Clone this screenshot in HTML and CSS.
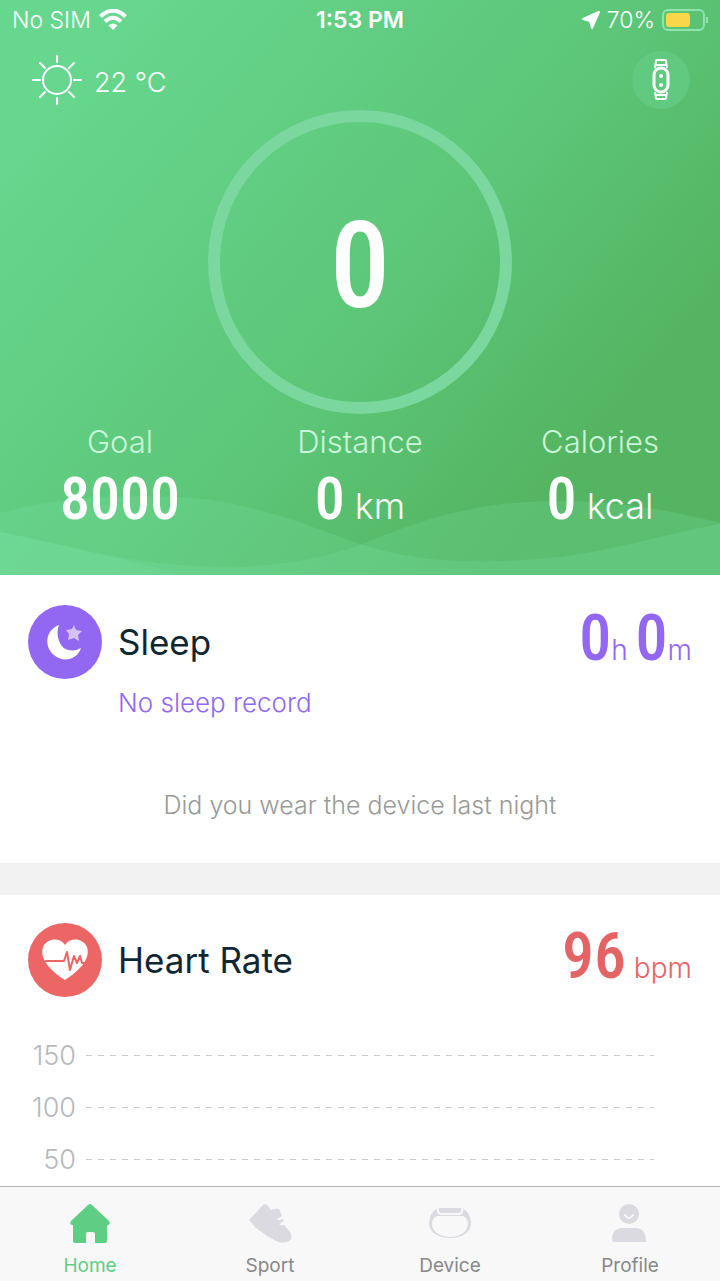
FILE: index.html
```
<!DOCTYPE html>
<html lang="en">
<head>
<meta charset="utf-8">
<meta name="viewport" content="width=device-width, initial-scale=1">
<title>Home</title>
<link rel="stylesheet" href="styles.css">
</head>
<body>

<header class="summary">
    <svg class="waves" viewBox="0 0 720 80" preserveAspectRatio="none" aria-hidden="true">
        <path class="wave" d="M0 18C60 2 120 0 180 2C250 6 300 28 360 49C420 68 480 70 560 62C620 54 670 38 720 29V80H0Z"/>
        <path class="wave" d="M0 37C60 48 110 64 180 70C250 76 310 68 360 50C420 26 470 6 560 6C630 6 680 18 720 28V80H0Z"/>
        <path class="wave" d="M0 37C60 50 120 62 180 80H0Z"/>
    </svg>

    <div class="status">
        <div class="status-side">
            <span>No SIM</span>
            <svg width="28" height="22" viewBox="0 0 28 22" aria-hidden="true">
                <path d="M1.5 7.5Q14-4 26.500 7.500M6 12.500Q14 5 22 12.500" fill="none" stroke="#fff" stroke-width="4"/>
                <path d="M9.500 16.500Q14 12.500 18.500 16.500L14 21Z" fill="#fff"/>
            </svg>
        </div>
        <strong>1:53 PM</strong>
        <div class="status-side status-right">
            <svg width="18" height="18" viewBox="0 0 18 18" aria-hidden="true">
                <path d="M17 1L10 17L8 10L1 8Z" fill="#fff" stroke="#fff" stroke-width="2" stroke-linejoin="round"/>
            </svg>
            <span>70%</span>
            <svg width="46" height="24" viewBox="0 0 46 24" aria-hidden="true">
                <rect x="1" y="2" width="41" height="20" rx="5" fill="none" stroke="#8fe3ac" stroke-width="2"/>
                <rect x="4" y="5" width="24" height="14" rx="3" fill="#f9d64a"/>
                <path d="M45 9v6" stroke="#8fe3ac" stroke-width="2"/>
            </svg>
        </div>
    </div>

    <div class="toolbar">
        <div class="weather">
            <svg width="50" height="50" viewBox="0 0 50 50" fill="none" stroke="#fff" stroke-width="2" stroke-linecap="round" aria-hidden="true">
                <circle cx="25" cy="25" r="14"/>
                <path d="M25 1v6M25 43v6M1 25h7M42 25h7M8 8l5 5M37 37l5 5M42 8l-5 5M13 37l-5 5"/>
            </svg>
            <span>22 °C</span>
        </div>
        <button class="watch" type="button" aria-label="Device">
            <svg width="18" height="42" viewBox="0 0 18 42" fill="none" stroke="#fff" stroke-width="2" aria-hidden="true">
                <path d="M3 9L4 2Q4 1 5 1H13Q14 1 14 2L15 9M4 6H14M3 33L4 39Q4 40 5 40H13Q14 40 14 39L15 33M4 36H14"/>
                <rect x="2" y="9" width="14" height="24" rx="7" stroke-width="3"/>
                <circle cx="9" cy="17" r="2" fill="#fff" stroke="none"/>
                <circle cx="9" cy="26" r="2" fill="#fff" stroke="none"/>
            </svg>
        </button>
    </div>

    <div class="ring">0</div>

    <dl class="stats">
        <div>
            <dt>Goal</dt>
            <dd><b>8000</b></dd>
        </div>
        <div>
            <dt>Distance</dt>
            <dd><b>0</b> km</dd>
        </div>
        <div>
            <dt>Calories</dt>
            <dd><b>0</b> kcal</dd>
        </div>
    </dl>
</header>

<main>
    <section class="card sleep">
        <div class="card-head">
            <svg width="74" height="74" viewBox="0 0 74 74" aria-hidden="true">
                <circle cx="37" cy="37" r="37" fill="#9268f2"/>
                <path d="M31 20C17 25 16 42 26 50C35 58 49 55 53 43C44 48 35 45 32 38C29 32 29 25 31 20Z" fill="#fff"/>
                <path d="M46 20l2 5 6 1-4 4 1 6-5-3-6 2 1-6-3-4 6-1z" fill="#d3c3ef"/>
            </svg>
            <h2>Sleep</h2>
            <p class="value"><b>0</b>h <b>0</b>m</p>
        </div>
        <p class="record">No sleep record</p>
        <p class="hint">Did you wear the device last night</p>
    </section>

    <section class="card heart">
        <div class="card-head">
            <svg width="74" height="74" viewBox="0 0 74 74" aria-hidden="true">
                <circle cx="37" cy="37" r="37" fill="#ec6666"/>
                <path d="M37 22C32 14 19 15 15 24C11 36 23 48 37 57C51 48 63 36 59 24C55 15 42 14 37 22Z" fill="#fff"/>
                <path d="M17 38H36L39 29L42 47L46 33L49 40L52 33L54 40H58" fill="none" stroke="#ec6666" stroke-width="2" stroke-linejoin="round"/>
            </svg>
            <h2>Heart Rate</h2>
            <p class="value"><b>96</b> bpm</p>
        </div>
        <ul class="chart">
            <li><span>150</span><i></i></li>
            <li><span>100</span><i></i></li>
            <li><span>50</span><i></i></li>
        </ul>
    </section>
</main>

<nav class="tabs">
    <a class="active" href="#home">
        <svg width="44" height="44" viewBox="0 0 44 44" aria-hidden="true">
            <path d="M20 3Q22 1 24 3L41 19Q43 22 40 23H39V39Q39 41 37 41H27V32Q27 30 25 30H20Q18 30 18 32V41H7Q5 41 5 39V23H4Q1 22 3 19Z" fill="#60cd84"/>
        </svg>
        Home
    </a>
    <a href="#sport">
        <svg width="44" height="44" viewBox="0 0 44 44" aria-hidden="true">
            <path d="M1 18L15 3Q17 1 19 3L23 8Q28 6 31 7L34 14L29 17Q29 19 35 17L36 19L31 22Q32 24 36 23L42 30Q44 33 43 37Q40 42 30 40Q18 34 8 26Z" fill="#dbdae0"/>
        </svg>
        Sport
    </a>
    <a href="#device">
        <svg width="44" height="44" viewBox="0 0 44 44" aria-hidden="true">
            <path fill-rule="evenodd" d="M10 6H34Q43 11 43 21C43 31 33 36 22 36S1 31 1 21Q1 11 10 6ZM9 14Q4 16 4 22C4 30 13 35 22 35S40 30 40 22Q40 16 35 14Z" fill="#dbdae0"/>
            <path d="M10 5H34Q35 12 31 12H13Q9 12 10 5Z" fill="#dbdae0" stroke="#f8f8f8" stroke-width="2"/>
        </svg>
        Device
    </a>
    <a href="#profile">
        <svg width="44" height="44" viewBox="0 0 44 44" aria-hidden="true">
            <circle cx="21" cy="12" r="10" fill="#dbdae0"/>
            <path d="M17 13Q21 19 25 13" fill="none" stroke="#f8f8f8" stroke-width="2" stroke-linecap="round"/>
            <path d="M4 36Q5 26 14 26H29Q38 27 38 40H6Q4 40 4 36Z" fill="#dbdae0"/>
        </svg>
        Profile
    </a>
</nav>

</body>
</html>
```
FILE: styles.css
```
* {
    box-sizing: border-box;
}

body {
    display: flex;
    flex-direction: column;
    min-height: 100vh;
    margin: 0;
    font-family: Inter, "Liberation Sans", sans-serif;
    background-color: #fff;
    color: #0f2733;
}

h2, p, dl, dd, ul {
    margin: 0;
    padding: 0;
}

svg {
    display: block;
    flex-shrink: 0;
}

b {
    font-family: "Roboto Condensed", Roboto, sans-serif;
    font-weight: 500;
}

.summary {
    position: relative;
    padding-bottom: 32px;
    background: linear-gradient(130deg, #67d78f 10%, #5cc577 55%, #54b461 80%);
    color: #fff;
}

.waves {
    position: absolute;
    left: 0;
    bottom: 0;
    width: 100%;
    height: 80px;
}

.wave {
    fill: #7be2a8;
    fill-opacity: 0.22;
}

.status {
    display: grid;
    grid-template-columns: 1fr auto 1fr;
    align-items: center;
    height: 40px;
    padding: 0 12px;
    font-size: 23px;
    font-weight: 300;
}

.status strong {
    font-weight: 600;
}

.status-side {
    display: flex;
    align-items: center;
    gap: 8px;
}

.status-right {
    justify-content: flex-end;
    gap: 7px;
}

.toolbar {
    display: flex;
    justify-content: space-between;
    align-items: center;
    height: 80px;
    margin-bottom: -10px;
    padding: 0 30px 0 32px;
}

.weather {
    display: flex;
    align-items: center;
    gap: 12px;
    font-size: 27px;
    font-weight: 300;
}

.weather span {
    padding-top: 4px;
}

.watch {
    display: grid;
    place-items: center;
    width: 58px;
    height: 58px;
    padding: 0;
    border: none;
    border-radius: 50%;
    background-color: #61c980;
}

.ring {
    display: grid;
    place-items: center;
    width: 304px;
    height: 304px;
    margin: 0 auto;
    padding-top: 8px;
    border: 12px solid #7ad79d;
    border-radius: 50%;
    font: 500 120px "Roboto Condensed", Roboto, sans-serif;
}

.stats {
    position: relative;
    display: grid;
    grid-template-columns: repeat(3, 1fr);
    padding-top: 8px;
    text-align: center;
}

.stats dt {
    line-height: 40px;
    font-size: 31px;
    font-weight: 300;
    color: #c9f5d8;
}

.stats dd {
    line-height: 74px;
    font-size: 36px;
    font-weight: 300;
}

.stats b {
    font-size: 60px;
}

main {
    display: flex;
    flex: 1;
    flex-direction: column;
    gap: 32px;
    background-color: #f2f2f2;
}

.card {
    padding: 30px 28px;
    background-color: #fff;
}

.card-head {
    display: flex;
    align-items: center;
    gap: 16px;
    height: 74px;
}

.card h2 {
    flex: 1;
    font-size: 35px;
    font-weight: 400;
    color: #0f2733;
}

.value {
    padding-bottom: 8px;
    font-size: 28px;
    font-weight: 300;
}

.value b {
    font-size: 64px;
}

.sleep {
    color: #9268f2;
}

.record {
    padding: 4px 0 0 90px;
    line-height: 40px;
    font-size: 26px;
    font-weight: 300;
}

.hint {
    padding: 62px 0 8px;
    line-height: 40px;
    font-size: 25px;
    font-weight: 300;
    text-align: center;
    color: #999;
}

.heart {
    flex: 1;
    padding-top: 28px;
    padding-bottom: 0;
    color: #e46466;
}

.chart {
    padding: 32px 38px 0 0;
    list-style: none;
}

.chart li {
    display: flex;
    align-items: center;
    gap: 10px;
    height: 52px;
}

.chart span {
    width: 48px;
    text-align: right;
    font-size: 27px;
    font-weight: 300;
    color: #b8b8bc;
}

.chart i {
    flex: 1;
    height: 1px;
    background: repeating-linear-gradient(90deg, #ccc 0 6px, transparent 6px 12px);
}

.tabs {
    position: sticky;
    bottom: 0;
    display: grid;
    grid-template-columns: repeat(4, 1fr);
    height: 95px;
    padding-top: 15px;
    border-top: 1px solid #b2b2b2;
    background-color: #f8f8f8;
}

.tabs a {
    display: flex;
    flex-direction: column;
    align-items: center;
    gap: 8px;
    font-size: 19px;
    text-decoration: none;
    color: #888;
}

.tabs .active {
    color: #60cd84;
}
```
